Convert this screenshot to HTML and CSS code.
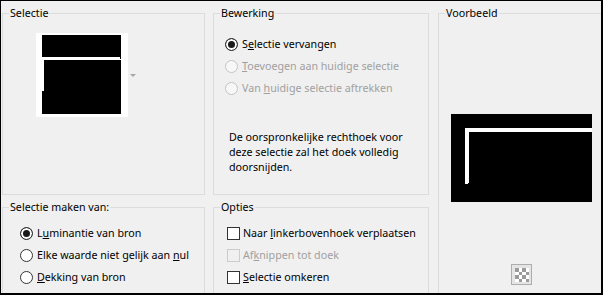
FILE: index.html
```html
<!DOCTYPE html>
<html lang="nl">
<head>
  <meta charset="UTF-8" />
  <title>Selectie maken</title>
  <link rel="stylesheet" href="styles.css">
</head>
<body>

  <div class="window">

    <!-- Selectie -->
    <fieldset class="group group-source">
      <legend>Selectie</legend>
      <div class="source-pick">
        <svg class="thumb" width="92" height="84" viewBox="0 0 92 84">
          <rect x="0" y="0" width="92" height="84" fill="#fff"/>
          <rect x="6" y="2" width="79" height="22" fill="#000"/>
          <rect x="84" y="24" width="1" height="2" fill="#000"/>
          <rect x="6" y="27" width="79" height="54" fill="#000"/>
          <rect x="6" y="27" width="2" height="31" fill="#fff"/>
        </svg>
        <span class="drop-arrow"></span>
      </div>
    </fieldset>

    <!-- Bewerking -->
    <fieldset class="group group-mode">
      <legend>Bewerking</legend>
      <div class="option-list">
        <label class="option">
          <span class="radio checked"></span><span>S<u>e</u>lectie vervangen</span>
        </label>
        <label class="option disabled">
          <span class="radio"></span><span><u>T</u>oevoegen aan huidige selectie</span>
        </label>
        <label class="option disabled">
          <span class="radio"></span><span>Van <u>h</u>uidige selectie aftrekken</span>
        </label>
      </div>
      <p class="note">De oorspronkelijke rechthoek voor deze selectie zal het doek volledig doorsnijden.</p>
    </fieldset>

    <!-- Voorbeeld -->
    <fieldset class="group group-preview">
      <legend>Voorbeeld</legend>
      <div class="preview-body">
        <svg class="preview" width="141" height="88" viewBox="0 0 141 88">
          <rect x="0" y="0" width="141" height="88" fill="#000"/>
          <rect x="14" y="14" width="127" height="4" fill="#fff"/>
          <rect x="14" y="14" width="4" height="56" fill="#fff"/>
          <rect x="17" y="69" width="1" height="1" fill="#000"/>
        </svg>
        <button class="checker-btn" type="button" aria-label="Transparantie">
          <svg width="14" height="14" viewBox="0 0 4 4" shape-rendering="crispEdges">
            <rect width="4" height="4" fill="#fff"/>
            <rect x="0" y="0" width="1" height="1" fill="#9b9b9b"/>
            <rect x="2" y="0" width="1" height="1" fill="#9b9b9b"/>
            <rect x="1" y="1" width="1" height="1" fill="#9b9b9b"/>
            <rect x="3" y="1" width="1" height="1" fill="#9b9b9b"/>
            <rect x="0" y="2" width="1" height="1" fill="#9b9b9b"/>
            <rect x="2" y="2" width="1" height="1" fill="#9b9b9b"/>
            <rect x="1" y="3" width="1" height="1" fill="#9b9b9b"/>
            <rect x="3" y="3" width="1" height="1" fill="#9b9b9b"/>
          </svg>
        </button>
      </div>
    </fieldset>

    <!-- Selectie maken van -->
    <fieldset class="group group-from">
      <legend>Selectie maken van:</legend>
      <div class="option-list">
        <label class="option">
          <span class="radio checked"></span><span>L<u>u</u>minantie van bron</span>
        </label>
        <label class="option">
          <span class="radio"></span><span>Elke waarde niet gelijk aan <u>n</u>ul</span>
        </label>
        <label class="option">
          <span class="radio"></span><span><u>D</u>ekking van bron</span>
        </label>
      </div>
    </fieldset>

    <!-- Opties -->
    <fieldset class="group group-options">
      <legend>Opties</legend>
      <div class="option-list">
        <label class="option">
          <span class="check"></span><span>Naar <u>l</u>inkerbovenhoek verplaatsen</span>
        </label>
        <label class="option disabled">
          <span class="check"></span><span>Af<u>k</u>nippen tot doek</span>
        </label>
        <label class="option">
          <span class="check"></span><span><u>S</u>electie omkeren</span>
        </label>
      </div>
    </fieldset>

  </div>

</body>
</html>
```

FILE: styles.css
```css
html, body {
  margin: 0; padding: 0;
  background: #f0f0f0;
}

/* Dialog window with its dark frame */
.window {
  width: 603px;
  height: 295px;
  box-sizing: border-box;
  border: 1px solid #000;
  border-right-width: 2px;
  border-bottom-width: 2px;
  background: #f0f0f0;
  overflow: hidden;
  padding: 4px 0 0 1px;
  display: grid;
  grid-template-columns: 203px 216px 168px;
  grid-template-rows: 190px 110px;
  column-gap: 8px;
  row-gap: 4px;
  font-family: 'Noto Sans', 'DejaVu Sans', sans-serif;
  font-size: 10.7px;
  color: #000;
  user-select: none;
}

/* Group boxes */
.group {
  margin: 0;
  padding: 0;
  min-width: 0;
  border: 1px solid #dcdcdc;
  box-sizing: border-box;
}

.group legend {
  margin-left: 6px;
  padding: 0 1px;
  line-height: 16px;
}

.group-source { grid-column: 1; grid-row: 1; }
.group-mode { grid-column: 2; grid-row: 1; }
.group-preview { grid-column: 3; grid-row: 1 / 3; margin-left: 1px; }
.group-from { grid-column: 1; grid-row: 2; }
.group-options { grid-column: 2; grid-row: 2; }

/* Selectie thumbnail with drop arrow */
.source-pick {
  display: flex;
  align-items: center;
  margin: 12px 0 0 33px;
}

.thumb { display: block; }

.drop-arrow {
  width: 0; height: 0;
  margin-left: 2px;
  border-left: 3px solid transparent;
  border-right: 3px solid transparent;
  border-top: 3px solid #a6a6a6;
}

/* Radio and checkbox rows */
.option-list {
  display: flex;
  flex-direction: column;
}

.option {
  display: flex;
  align-items: center;
  height: 22px;
  white-space: nowrap;
}

.option.disabled { color: #a0a0a0; }

.radio {
  width: 13px;
  height: 13px;
  box-sizing: border-box;
  border: 1px solid #333;
  border-radius: 50%;
  background: #fff;
  margin-right: 4px;
  flex-shrink: 0;
}

.radio.checked {
  background: #1a1a1a;
  box-shadow: inset 0 0 0 2px #fff;
}

.disabled .radio {
  border-color: #c4c4c4;
  background: #f7f7f7;
}

.check {
  width: 13px;
  height: 13px;
  box-sizing: border-box;
  border: 1px solid #333;
  background: #fff;
  margin-right: 3px;
  flex-shrink: 0;
}

.disabled .check {
  border-color: #cccccc;
  background: #f0f0f0;
}

.group-mode .option-list { margin: 12px 0 0 11px; }
.group-from .option-list { margin: 7px 0 0 17px; }
.group-options .option-list { margin: 7px 0 0 13px; }

.note {
  margin: 31px 0 0 15px;
  line-height: 15px;
}

/* Voorbeeld */
.preview-body {
  display: flex;
  flex-direction: column;
  align-items: center;
}

.preview {
  display: block;
  margin-top: 93px;
}

.checker-btn {
  margin-top: 62px;
  width: 21px;
  height: 21px;
  padding: 0;
  box-sizing: border-box;
  border: 1px solid #adadad;
  background: #e5e5e5;
  display: flex;
  align-items: center;
  justify-content: center;
}

.checker-btn svg { display: block; }
```
